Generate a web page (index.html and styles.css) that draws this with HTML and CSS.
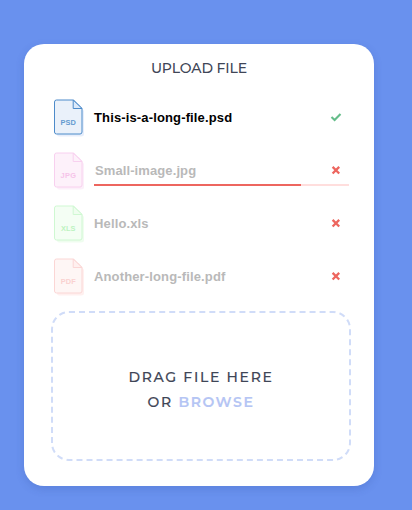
FILE: index.html
```html
<!DOCTYPE html>
<html lang="en">
<head>
<meta charset="utf-8">
<title>Upload file</title>
<link rel="stylesheet" href="styles.css">
</head>
<body>
<svg class="defs" aria-hidden="true">
  <symbol id="doc" viewBox="0 0 32 40">
    <path class="doc-shadow" d="M3 6H25L30 13V36Q30 38.5 27 38.5H5Q3 38.5 3 36Z"/>
    <path class="doc-page" d="M2.5 2H19.5L28 10.5V34Q28 36 26 36H2.5Q.5 36 .5 34V4Q.5 2 2.5 2Z"/>
    <path class="doc-fold" d="M19.2 2V10.5H28Z"/>
  </symbol>
  <symbol id="cross" viewBox="0 0 12 12"><path d="M2.6 2.9L9.2 9.5M9.2 2.9L2.6 9.5" fill="none" stroke="#ed665f" stroke-width="2.3"/></symbol>
</svg>
<main class="card">
  <h1 class="title">UPLOAD FILE</h1>
  <ul class="files">
    <li class="file psd">
      <svg class="doc" viewBox="0 0 32 40"><use href="#doc"/><text x="14.2" y="26.6" text-anchor="middle" textLength="15.5">PSD</text></svg>
      <div class="info"><span class="name n1">This-is-a-long-file.psd</span>
      <svg class="mark" viewBox="0 0 12 12"><path d="M1.5 6L4.6 9L10.5 3" fill="none" stroke="#65bd8a" stroke-width="2.1"/></svg></div>
    </li>
    <li class="file jpg">
      <svg class="doc" viewBox="0 0 32 40"><use href="#doc"/><text x="14.2" y="26.6" text-anchor="middle" textLength="15.5">JPG</text></svg>
      <div class="info loading"><span class="name n2">Small-image.jpg</span>
      <svg class="mark"><use href="#cross"/></svg></div>
    </li>
    <li class="file xls">
      <svg class="doc" viewBox="0 0 32 40"><use href="#doc"/><text x="14.2" y="26.6" text-anchor="middle" textLength="14.5">XLS</text></svg>
      <div class="info"><span class="name n3">Hello.xls</span>
      <svg class="mark"><use href="#cross"/></svg></div>
    </li>
    <li class="file pdf">
      <svg class="doc" viewBox="0 0 32 40"><use href="#doc"/><text x="14.2" y="26.6" text-anchor="middle" textLength="15">PDF</text></svg>
      <div class="info"><span class="name n4">Another-long-file.pdf</span>
      <svg class="mark"><use href="#cross"/></svg></div>
    </li>
  </ul>
  <div class="drop">
    <p class="drag">DRAG FILE HERE</p>
    <p class="or">OR <span class="browse">BROWSE</span></p>
  </div>
</main>
</body>
</html>
```
FILE: styles.css
```css
* { box-sizing: border-box; }
body {
  margin: 0;
  height: 510px;
  padding: 44px 38px 24px 24px;
  background: #6991ee;
  font-family: "Liberation Sans", Arial, sans-serif;
  overflow: hidden;
}
.defs { display: none; }
.card {
  width: 350px;
  height: 442px;
  padding: 14px 23px 25px 27px;
  border-radius: 20px;
  background: #fff;
  box-shadow: 0 3px 8px rgba(40, 70, 150, .2);
}
.title {
  margin: 0;
  height: 20px;
  padding-right: 4px;
  font: 500 14px/20px Montserrat, Inter, sans-serif;
  letter-spacing: -.1px;
  text-align: center;
  color: #3f4657;
}
.files { margin: 13px 0 0; padding: 0; list-style: none; }
.file {
  display: flex;
  height: 53px;
  padding: 7px 2px 0 3px;
}
.doc {
  flex: none;
  width: 32px;
  height: 40px;
  margin-right: 8px;
  overflow: visible;
  font: 600 7.4px "Liberation Sans", Arial, sans-serif;
}
.doc-shadow { fill: var(--shadow); }
.doc-page { fill: var(--fill); stroke: var(--line); }
.doc-fold { fill: var(--fold); stroke: var(--line); stroke-linejoin: round; }
.doc text { fill: var(--label); }
.psd { --line: #4d8bca; --fill: #eaf1fa; --fold: #dceafa; --label: #659bd0; --shadow: #e7eefb; }
.jpg { --line: #f8d0ef; --fill: #fdf1fa; --fold: #fdf1fa; --label: #f6c3e9; --shadow: #fceff9; }
.xls { --line: #cff8d2; --fill: #f4fef4; --fold: #effdef; --label: #bdf3c1; --shadow: #effdef; }
.pdf { --line: #fbd6d5; --fill: #fef6f5; --fold: #fff0ef; --label: #fad1d0; --shadow: #fff0ef; }
.info {
  position: relative;
  display: flex;
  flex: 1;
  justify-content: space-between;
  align-items: center;
  height: 38px;
  padding-right: 7px;
}
.name {
  padding-top: 2px;
  font-size: 13px;
  font-weight: 700;
  line-height: 18px;
  letter-spacing: .14px;
  white-space: nowrap;
  color: #b9b9b9;
}
.psd .name { color: #000; }
.jpg .name { padding-left: 1px; letter-spacing: .1px; }
.mark { width: 12px; height: 12px; }
.loading::after {
  content: "";
  position: absolute;
  left: 0;
  right: 0;
  top: 86.8%;
  height: 2px;
  background: linear-gradient(to right, #ed665f 207px, #ffdedd 207px);
}
.drop {
  display: flex;
  flex-direction: column;
  align-items: center;
  width: 300px;
  height: 150px;
  margin-top: 8px;
  padding-top: 52px;
  border: 2px dashed #d0dcf8;
  border-radius: 18px;
  font: 500 14px/25px Montserrat, Inter, sans-serif;
  color: #3f4657;
}
.drop p { margin: 0; letter-spacing: 1.7px; white-space: nowrap; -webkit-text-stroke: .15px currentColor; }
.browse { font-weight: 600; letter-spacing: 1.6px; color: #b5c5f4; }
```
